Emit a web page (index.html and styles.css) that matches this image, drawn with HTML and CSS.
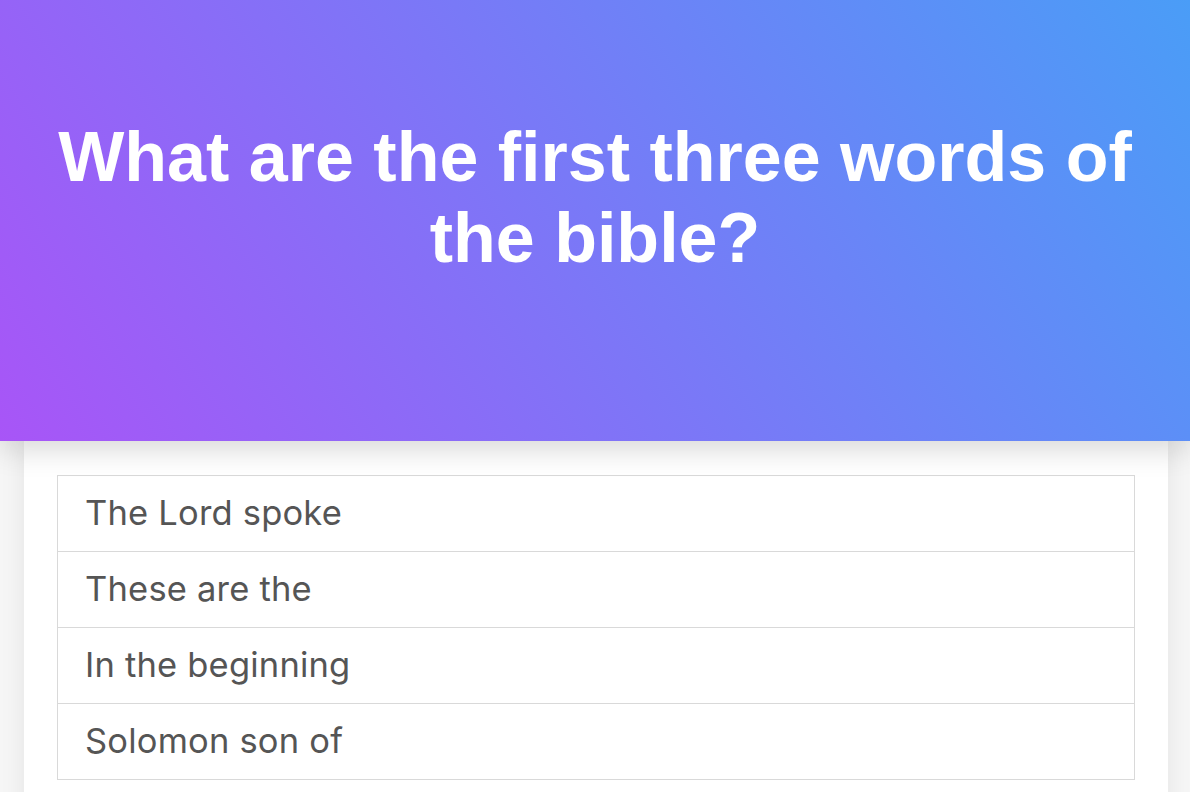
FILE: index.html
```html
<!DOCTYPE html>
<html lang="en">
<head>
<meta charset="utf-8">
<title>Quiz</title>
<link rel="stylesheet" href="styles.css">
</head>
<body>
<header class="hero">
  <h1 class="question">What are the first three words of the bible?</h1>
</header>
<main class="card">
  <ul class="answers">
    <li class="answer">The Lord spoke</li>
    <li class="answer">These are the</li>
    <li class="answer">In the beginning</li>
    <li class="answer">Solomon son of</li>
  </ul>
</main>
</body>
</html>
```
FILE: styles.css
```css
html, body {
  margin: 0;
  padding: 0;
}
body {
  background: #f6f6f6;
  font-family: "Liberation Sans", Arial, sans-serif;
  min-height: 792px;
}
.hero {
  position: relative;
  z-index: 2;
  height: 441px;
  box-sizing: border-box;
  padding: 117px 30px 0;
  background: linear-gradient(57deg, #a855f7 0%, #4a9df7 100%);
  box-shadow: 0 8px 28px rgba(0, 0, 0, 0.16);
}
.question {
  margin: 0;
  color: #ffffff;
  font-family: "Liberation Sans", Arial, sans-serif;
  font-weight: 700;
  font-size: 70px;
  line-height: 81px;
  text-align: center;
}
.card {
  position: relative;
  z-index: 1;
  margin: 0 22px 0 24px;
  background: #ffffff;
  padding: 34px 33px 40px;
  box-shadow: 0 0 24px rgba(0, 0, 0, 0.08);
  min-height: 400px;
}
.answers {
  list-style: none;
  margin: 0;
  padding: 0;
  border: 1px solid #d9d9d9;
}
.answer {
  height: 75px;
  box-sizing: border-box;
  display: flex;
  align-items: center;
  padding: 0 27px 2px;
  font-family: "Inter", "Noto Sans", sans-serif;
  font-size: 34.5px;
  letter-spacing: 0.2px;
  color: #555555;
  border-top: 1px solid #d9d9d9;
}
.answer:first-child {
  border-top: none;
}
.answer + .answer {
  height: 76px;
}
```
